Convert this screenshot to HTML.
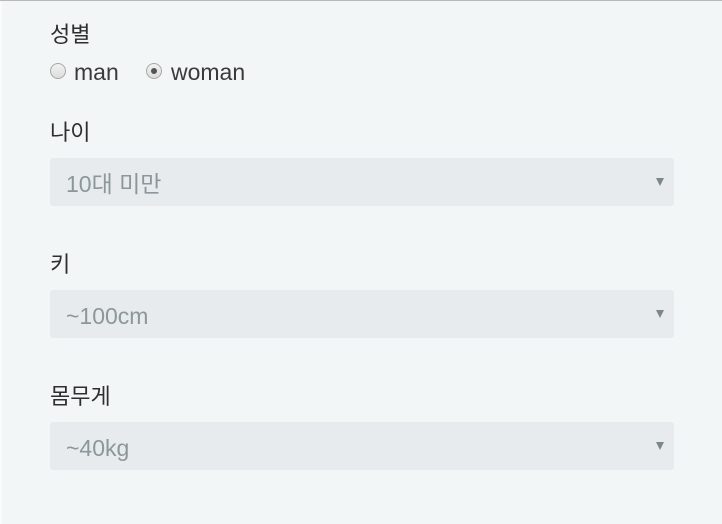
<!DOCTYPE html>
<html><head><meta charset="utf-8"><style>
html,body{margin:0;padding:0}
body{width:722px;height:523px;background:#f3f6f7;position:relative;overflow:hidden;font-family:"Liberation Sans","Noto Sans CJK KR",sans-serif;border-top:1px solid #b8b8b8;box-sizing:border-box}
.edge{position:absolute;left:0;top:0;width:2px;height:523px;background:#fafbfb}
.lab{position:absolute;left:50px;font-size:22px;color:#2e2e2e}
.sel{position:absolute;left:50px;width:624px;height:48px;background:#e7ebed;border-radius:3px;color:#8c979c;font-size:23px;line-height:52px;box-sizing:border-box;padding-left:16px}
.sel:after{content:"";position:absolute;right:10px;top:20px;border-left:4px solid transparent;border-right:4px solid transparent;border-top:8px solid #7c878d}
.rad{position:absolute;top:62px;width:16px;height:16px;border-radius:50%;border:1px solid #a8a8a8;background:linear-gradient(#f2f2f2,#dcdcdc);box-sizing:border-box}
.rt{position:absolute;top:58px;font-size:23px;color:#3a3a3a}
</style></head><body>
<div class="edge"></div>
<div class="lab" style="top:16px">성별</div>
<div class="rad" style="left:50px"></div><div class="rt" style="left:74px">man</div>
<div class="rad" style="left:146px"><div style="position:absolute;left:4px;top:4px;width:6px;height:6px;border-radius:50%;background:#555"></div></div><div class="rt" style="left:171px">woman</div>
<div class="lab" style="top:114px">나이</div>
<div class="sel" style="top:157px">10대 미만</div>
<div class="lab" style="top:246px">키</div>
<div class="sel" style="top:289px">~100cm</div>
<div class="lab" style="top:378px">몸무게</div>
<div class="sel" style="top:421px">~40kg</div>
</body></html>
